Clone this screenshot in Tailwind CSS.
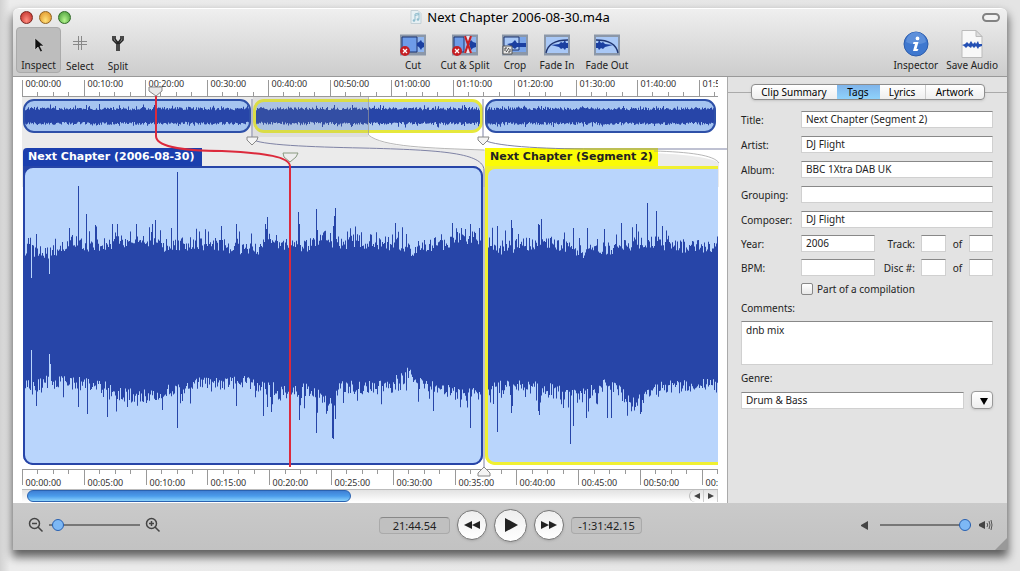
<!DOCTYPE html>
<html lang="en">
<head>
<meta charset="utf-8">
<meta name="viewport" content="width=device-width, initial-scale=1">
<title>Next Chapter 2006-08-30.m4a</title>
<script src="https://cdn.jsdelivr.net/npm/@tailwindcss/browser@4"></script>
</head>
<body class="min-h-screen flex bg-gradient-to-r from-[#d2d2d2] via-[#ececec] via-1% to-[#e4e4e4] pt-2 pl-[13px] pr-[13px] pb-[21px] font-['Noto_Sans',sans-serif] text-[10px] leading-[14px] text-[#222]">
<main class="flex-1 flex flex-col min-w-0 rounded-t-md bg-[#c6c6c6] shadow-[0_6px_10px_1px_rgba(0,0,0,0.6)]">

  <!-- Title bar and toolbar -->
  <header class="h-[69px] flex flex-col rounded-t-md border-t border-b border-t-white border-b-[#999] bg-gradient-to-b from-[#efefef] to-[#cdcdcd]">
    <div class="h-[16px] flex items-center justify-between px-[7px]">
      <div class="w-[52px] flex gap-[6px]">
        <button aria-label="Close" class="size-[13px] rounded-full border border-[#7c2620] bg-radial-[at_50%_75%] from-[#ff8d80] to-[#b92520]"></button>
        <button aria-label="Minimize" class="size-[13px] rounded-full border border-[#8f6220] bg-radial-[at_50%_75%] from-[#ffe27a] to-[#dd8a20]"></button>
        <button aria-label="Zoom" class="size-[13px] rounded-full border border-[#2f6a25] bg-radial-[at_50%_75%] from-[#b5f58d] to-[#3f9433]"></button>
      </div>
      <h1 class="flex items-center gap-[5px] text-[13px] leading-[16px] text-black">
        <svg class="w-3 h-[14px]" viewBox="0 0 12 14"><path d="M1 .5h7l3 3v10H1z" fill="#e6f0f4" stroke="#c3d0d6"/><path d="M5 10V4l4-1v6M5 5.500l4-1" fill="none" stroke="#8fbccd"/><circle cx="4" cy="10.500" r="1.300" fill="#8fbccd"/><circle cx="8" cy="9.500" r="1.300" fill="#8fbccd"/></svg>
        Next Chapter 2006-08-30.m4a
      </h1>
      <div class="w-[52px] flex justify-end"><button aria-label="Toggle toolbar" class="w-[18px] h-[9px] rounded-full border-2 border-[#828282] bg-[#f2f2f2]"></button></div>
    </div>
    <nav class="flex-1 flex justify-between pl-[3px] pr-[9px] pt-[2px]">
      <div class="w-[262px] flex">
        <button class="w-[45px] h-[46px] flex flex-col items-center justify-between pt-[7px] rounded border border-[#aaa] bg-[#bdbdbd]">
          <svg class="w-4 h-5" viewBox="0 0 16 20"><path d="M4 3v12l3-3 2.500 5 2-1-2.500-5h4z" fill="#111" stroke="#ddd" stroke-width=".6"/></svg>Inspect</button>
        <button class="w-[38px] h-[46px] flex flex-col items-center justify-between pt-[7px]">
          <svg class="w-4 h-5" viewBox="0 0 16 20"><path d="M6.500 2v14M9.500 2v14M1 7.500h14M1 10.500h14" stroke="#888"/><path d="M7 8h2v2H7z" fill="#ddd"/></svg>Select</button>
        <button class="w-[38px] h-[46px] flex flex-col items-center justify-between pt-[7px]">
          <svg class="w-4 h-5" viewBox="0 0 16 20"><path d="M3 2v4l4 4v7M13 2v4l-4 4v7M5 2v3l3 4 3-4V2" fill="none" stroke="#222" stroke-width="1.600"/></svg>Split</button>
      </div>
      <div class="flex gap-[10px] pt-[7px]">
        <button class="w-8 flex flex-col items-center gap-[2px]">
          <svg class="w-7 h-[22px]" viewBox="0 0 28 22"><path d="M1 .5h26v21H1z" fill="#8b97a8"/><path d="M3 3h22v15H3z" fill="#8fb5ef"/><path d="M3 3h15v15H3z" fill="#6e9ce8" stroke="#1f3470"/><path d="M18 9l2-1 2-2 1 2 2 1v4l-2 1-1 2-2-3-2-1z" fill="#1b3fa0"/><circle cx="6" cy="17" r="5" fill="#c51f24"/><path d="M4 15l4 4m0-4l-4 4" stroke="#fff" stroke-width="1.300"/></svg>Cut</button>
        <button class="w-[52px] flex flex-col items-center gap-[2px]">
          <svg class="w-7 h-[22px]" viewBox="0 0 28 22"><path d="M1 .5h26v21H1z" fill="#8b97a8"/><path d="M3 3h22v15H3z" fill="#8fb5ef"/><path d="M3 3h10v15H3z" fill="#6e9ce8" stroke="#1f3470"/><path d="M18 8l2-2 2 2 3 1v4l-3 1-2 2-2-3z" fill="#1b3fa0"/><path d="M13 2h8l-3 8 3 9h-8l3-9z" fill="#e8e4f0"/><path d="M14 2l6 17M20 2l-6 17" stroke="#c51f24" stroke-width="2.200"/><circle cx="6" cy="17" r="5" fill="#c51f24"/><path d="M4 15l4 4m0-4l-4 4" stroke="#fff" stroke-width="1.300"/></svg>Cut &amp; Split</button>
        <button class="w-[28px] flex flex-col items-center gap-[2px]">
          <svg class="w-7 h-[22px]" viewBox="0 0 28 22"><path d="M1 .5h26v21H1z" fill="#8b97a8"/><path d="M3 3h22v15H3z" fill="#7ba5e8"/><path d="M3 3h15v13H3z" fill="#a9c8f6" stroke="#1f3470"/><path d="M6 10l5-1 3-3 2 3 9 0v4l-9 0-2 2-3-2z" fill="#1b3fa0"/><path d="M2 12h9v8H2z" fill="#e8e8e8" stroke="#555"/><path d="M4 17v-3h2M9 15v3H7M5 18l3-4" fill="none" stroke="#444"/></svg>Crop</button>
        <button class="w-9 flex flex-col items-center gap-[2px]">
          <svg class="w-7 h-[22px]" viewBox="0 0 28 22"><path d="M1 .5h26v21H1z" fill="#8b97a8"/><path d="M3 3h22v16H3z" fill="#a9c8f6"/><path d="M8 11l8-1 2-2 2 1 2-3 1 3 2 0v5l-2 0-1 2-2-2-2 1-2-2z" fill="#1b3fa0"/><path d="M3 19C5 9 13 6 25 6" fill="none" stroke="#1f3470" stroke-width="1.300"/></svg>Fade In</button>
        <button class="w-[44px] flex flex-col items-center gap-[2px]">
          <svg class="w-7 h-[22px]" viewBox="0 0 28 22"><path d="M1 .5h26v21H1z" fill="#8b97a8"/><path d="M3 3h22v16H3z" fill="#a9c8f6"/><path d="M20 11l-8-1-2-2-2 1-2-3-1 3-2 0v5l2 0 1 2 2-2 2 1 2-2z" fill="#1b3fa0"/><path d="M25 19C23 9 15 6 3 6" fill="none" stroke="#1f3470" stroke-width="1.300"/></svg>Fade Out</button>
      </div>
      <div class="w-[250px] flex justify-end gap-2 pt-[3px]">
        <button class="flex flex-col items-center">
          <svg class="w-7 h-7" viewBox="0 0 28 28"><circle cx="14" cy="14" r="12" fill="#3f78cf" stroke="#2d5cab"/><path d="M4 12a10 10 0 0 1 20 0c-6 3-14 3-20 0z" fill="#5d8fda"/><path d="M15.500 6.500a1.900 1.900 0 1 1 0 3.800 1.900 1.900 0 0 1 0-3.800zM11.500 12h5l-2 7h2l-1 2h-4.500l2-7h-2z" fill="#fff"/></svg>Inspector</button>
        <button class="flex flex-col items-center">
          <svg class="w-7 h-7" viewBox="0 0 28 28"><path d="M4 .5h14l6 6v21H4z" fill="#f8f8f8" stroke="#bbb"/><path d="M18 .5v6h6z" fill="#ddd" stroke="#bbb"/><path d="M4 15l3-1 2-2 2 2 2-3 2 3 2-2 1 2 2-3 1 3 3 0v2l-3 1-1 2-2-3-2 2-2-2-1 2-3-2-2 2-2-2z" fill="#2450b4"/></svg>Save Audio</button>
      </div>
    </nav>
  </header>

  <div class="flex-1 flex min-h-0">
    <!-- Timeline -->
    <section aria-label="Timeline" class="relative isolate flex-1 min-w-0 flex flex-col bg-white border-r border-[#aaa] pl-[9px] pr-[9px] overflow-hidden">
      <!-- Shaded span joining the visible range to the detail view -->
      <svg class="absolute -z-10 left-0 top-0 w-[715px] h-[110px]" viewBox="0 0 715 110"><path d="M9 20H355V58C370 72 420 72 480 73C600 75 690 74 706 86V110H9z" fill="#ebebeb"/></svg>
      <svg id="ruler-top" class="w-full h-5 block bg-white" aria-label="Overview ruler"></svg>
      <div class="flex gap-[2px] pr-[2px] pl-[1px] h-[51px] pt-[2px] pb-[15px]">
        <div class="w-[228px] rounded-[11px] border-2 border-[#2e50a8] bg-[#a5c4f0] overflow-hidden"><svg id="mini-1" class="w-full h-full"></svg></div>
        <div class="w-[230px] rounded-[11px] border-3 border-[#e6e83c] bg-[#b0cbf0] overflow-hidden"><svg id="mini-2" class="w-full h-full"></svg></div>
        <div class="flex-1 min-w-0 rounded-[11px] border-2 border-[#2e50a8] bg-[#a5c4f0] overflow-hidden"><svg id="mini-3" class="w-full h-full"></svg></div>
      </div>
      <div class="flex-1 min-h-0 flex gap-[2px] pl-[1px]">
        <article class="w-[460px] flex flex-col">
          <h2 class="self-start h-[18px] px-[5px] pr-2 rounded-tl bg-[#1b3fae] font-['DejaVu_Sans',sans-serif] text-[11px] leading-[17px] font-bold text-white">Next Chapter (2006-08-30)</h2>
          <div class="flex-1 min-h-0 rounded-tr-[10px] rounded-b-[10px] bg-[#2745a8]"><div class="h-full rounded-[10px] border-2 border-[#2745a8] bg-[#b9d5fc] overflow-hidden"><svg id="wave-1" class="w-full h-full"></svg></div></div>
        </article>
        <article class="flex-1 min-w-0 flex flex-col">
          <h2 class="self-start h-[18px] px-[5px] bg-[#fbfb05] font-['DejaVu_Sans',sans-serif] text-[11px] leading-[17px] font-bold text-[#222]">Next Chapter (Segment 2)</h2>
          <div class="flex-1 min-h-0 rounded-bl-[10px] bg-[#f0f032]"><div class="h-full rounded-l-[10px] border-3 border-r-0 border-[#f0f032] bg-[#b9d5fc] overflow-hidden"><svg id="wave-2" class="w-full h-full"></svg></div></div>
        </article>
      </div>
      <svg id="ruler-bottom" class="w-full h-[24px] block" aria-label="Detail ruler"></svg>
      <div class="flex h-[13px] mb-[1px] border-t border-[#bbb] bg-gradient-to-b from-[#e2e2e2] to-white">
        <div class="flex-1 pl-[5px]"><div class="w-[49%] h-[12px] rounded-full border border-[#2a62b0] bg-gradient-to-b from-[#3f80d4] via-[#4b9ceb] to-[#8ad2fb]"></div></div>
        <button aria-label="Scroll left" class="w-[14px] border-l border-[#bbb] rounded-l-full flex items-center justify-center"><svg class="w-2 h-2" viewBox="0 0 8 8"><path d="M7 1v6L1 4z" fill="#444"/></svg></button>
        <button aria-label="Scroll right" class="w-[15px] border-x border-[#ccc] flex items-center justify-center"><svg class="w-2 h-2" viewBox="0 0 8 8"><path d="M1 1v6l6-3z" fill="#444"/></svg></button>
      </div>
      <!-- Connectors and playhead over the clips -->
      <svg class="absolute left-0 top-0 w-[715px] h-[400px] pointer-events-none" viewBox="0 0 715 400" fill="none">
        <path d="M240 20h115v40H240z" fill="#888" opacity=".13"/>
        <path d="M355.500 20V58c14 12 60 13 116 15M641 74c35 1 60 4 65 12" stroke="#999" stroke-opacity=".7"/>
        <path d="M239 22v40c6 6 60 8 110 9C430 73 470 76 471 93v300M470 22v40c6 7 60 10 110 10h135" stroke="#7f83a5"/>
        <path d="M234 60h11l-1 3-5 5-5-5zM465 60h11l-1 3-5 5-5-5z" fill="#f4f4f4" stroke="#888"/>
        <path d="M465 399v-3l6-6 6 6v3z" fill="#f4f4f4" stroke="#888"/>
        <path d="M136 10h13v4l-6 5-7-5z" fill="#e4e4e4" fill-opacity=".8" stroke="#888"/>
        <path d="M270 76h15l-2 4-6 5-6-5z" fill="#eee" stroke="#8a9a80"/>
        <path d="M143 19v40c0 12 35 15 66 15 45 2 67 6 68 15v301" stroke="#dc2a3c" stroke-width="2"/>
      </svg>
    </section>

    <!-- Inspector -->
    <aside class="w-[279px] bg-[#e3e3e3] flex flex-col">
      <div class="relative flex justify-center pt-[7px] pb-[11px] before:absolute before:inset-x-0 before:top-[15px] before:h-px before:bg-[#aaa]">
        <div role="tablist" class="relative flex h-[16px] rounded border border-[#8d8d8d] bg-gradient-to-b from-white to-[#eee] shadow-sm overflow-hidden text-black">
          <button role="tab" class="w-[85px]">Clip Summary</button>
          <button role="tab" aria-selected="true" class="w-[43px] bg-gradient-to-b from-[#7fb4ea] to-[#8fd2fb]">Tags</button>
          <button role="tab" class="w-[46px] border-r border-[#ccc]">Lyrics</button>
          <button role="tab" class="w-[58px]">Artwork</button>
        </div>
      </div>
      <form class="flex flex-col pl-[13px] pr-[14px]">
        <div class="grid grid-cols-[60px_1fr] auto-rows-[17px] gap-y-[8px] items-center">
          <label for="title">Title:</label><input id="title" value="Next Chapter (Segment 2)" class="min-w-0 h-[17px] px-1 pb-px bg-white border border-[#d0d0d0] border-t-[#888]">
          <label for="artist">Artist:</label><input id="artist" value="DJ Flight" class="min-w-0 h-[17px] px-1 pb-px bg-white border border-[#d0d0d0] border-t-[#888]">
          <label for="album">Album:</label><input id="album" value="BBC 1Xtra DAB UK" class="min-w-0 h-[17px] px-1 pb-px bg-white border border-[#d0d0d0] border-t-[#888]">
          <label for="grouping">Grouping:</label><input id="grouping" class="min-w-0 h-[17px] px-1 bg-white border border-[#d0d0d0] border-t-[#888]">
          <label for="composer">Composer:</label><input id="composer" value="DJ Flight" class="min-w-0 h-[17px] px-1 pb-px bg-white border border-[#d0d0d0] border-t-[#888]">
        </div>
        <div class="grid grid-cols-[60px_74px_46px_25px_23px_1fr] auto-rows-[17px] gap-y-[7px] items-center mt-[7px]">
          <label for="year">Year:</label><input id="year" value="2006" class="min-w-0 h-[17px] px-1 pb-px bg-white border border-[#d0d0d0] border-t-[#888]">
          <label for="track" class="text-right pr-[6px]">Track:</label><input id="track" class="min-w-0 h-[17px] bg-white border border-[#d0d0d0] border-t-[#888]">
          <label for="tracks" class="text-center">of</label><input id="tracks" class="min-w-0 h-[17px] bg-white border border-[#d0d0d0] border-t-[#888]">
          <label for="bpm">BPM:</label><input id="bpm" class="min-w-0 h-[17px] px-1 bg-white border border-[#d0d0d0] border-t-[#888]">
          <label for="disc" class="text-right pr-[6px]">Disc #:</label><input id="disc" class="min-w-0 h-[17px] bg-white border border-[#d0d0d0] border-t-[#888]">
          <label for="discs" class="text-center">of</label><input id="discs" class="min-w-0 h-[17px] bg-white border border-[#d0d0d0] border-t-[#888]">
        </div>
        <label class="flex items-center gap-1 ml-[60px] mt-[6px]"><input type="checkbox" class="appearance-none size-[12px] rounded-[2px] border border-[#888] bg-gradient-to-b from-white to-[#e8e8e8]">Part of a compilation</label>
        <label for="comments" class="mt-[5px]">Comments:</label>
        <textarea id="comments" class="mt-[6px] h-[44px] px-1 py-[1px] resize-none bg-white border border-[#d0d0d0] border-t-[#888]">dnb mix</textarea>
        <label for="genre" class="mt-[6px]">Genre:</label>
        <div class="flex items-center gap-[7px] mt-[6px]">
          <input id="genre" value="Drum &amp; Bass" class="flex-1 min-w-0 h-[17px] px-1 bg-white border border-[#d0d0d0] border-t-[#888]">
          <button type="button" aria-label="Choose genre" class="w-[22px] h-[18px] rounded border border-[#999] bg-gradient-to-b from-white to-[#eee] shadow-sm flex items-end justify-center pl-1 pb-[3px]"><svg class="w-2 h-[7px]" viewBox="0 0 8 7"><path d="M0 0h8L4 7z" fill="#000"/></svg></button>
        </div>
      </form>
    </aside>
  </div>

  <!-- Transport -->
  <footer class="relative h-[47px] flex items-center justify-between pl-[15px] pr-[14px] pb-[3px] bg-gradient-to-b from-[#cacaca] to-[#c2c2c2]">
    <div class="w-[250px] flex items-center gap-[5px]">
      <svg class="size-4" viewBox="0 0 16 16" fill="none" stroke="#444" stroke-width="1.500"><circle cx="6.500" cy="6.500" r="5"/><path d="M4 6.500h5M10 10l4.500 4.500"/></svg>
      <input type="range" aria-label="Timeline zoom" value="4" class="appearance-none w-[91px] h-4 bg-[linear-gradient(#777,#777)] bg-[length:100%_2px] bg-center bg-no-repeat [&::-webkit-slider-thumb]:appearance-none [&::-webkit-slider-thumb]:size-3 [&::-webkit-slider-thumb]:rounded-full [&::-webkit-slider-thumb]:border [&::-webkit-slider-thumb]:border-[#2860b0] [&::-webkit-slider-thumb]:bg-[#7db8f5]">
      <svg class="size-4" viewBox="0 0 16 16" fill="none" stroke="#444" stroke-width="1.500"><circle cx="6.500" cy="6.500" r="5"/><path d="M4 6.500h5M6.500 4v5M10 10l4.500 4.500"/></svg>
    </div>
    <div class="flex items-center gap-[7px]">
      <output class="w-[71px] h-[17px] rounded border border-[#aaa] border-t-[#888] bg-[#c0c0c0] text-center text-[11px] leading-[15px]">21:44.54</output>
      <button aria-label="Rewind" class="size-[30px] rounded-full border border-[#777] bg-gradient-to-b from-[#eee] to-white shadow-sm flex items-center justify-center"><svg class="w-4 h-2" viewBox="0 0 16 8"><path d="M8 0v8L0 4zM16 0v8L8 4z" fill="#222"/></svg></button>
      <button aria-label="Play" class="size-[33px] rounded-full border border-[#777] bg-gradient-to-b from-[#eee] to-white shadow-sm flex items-center justify-center"><svg class="w-[14px] h-[14px]" viewBox="0 0 14 14"><path d="M1 0v14l13-7z" fill="#222"/></svg></button>
      <button aria-label="Fast forward" class="size-[30px] rounded-full border border-[#777] bg-gradient-to-b from-[#eee] to-white shadow-sm flex items-center justify-center"><svg class="w-4 h-2" viewBox="0 0 16 8"><path d="M0 0v8l8-4zM8 0v8l8-4z" fill="#222"/></svg></button>
      <output class="w-[71px] h-[17px] rounded border border-[#aaa] border-t-[#888] bg-[#c0c0c0] text-center text-[11px] leading-[15px]">-1:31:42.15</output>
    </div>
    <div class="w-[250px] flex items-center justify-end gap-2">
      <svg class="w-[7px] h-[9px] mr-1" viewBox="0 0 7 9"><path d="M7 0v9L0 5V4z" fill="#444"/></svg>
      <input type="range" aria-label="Volume" value="100" class="appearance-none w-[91px] h-4 bg-[linear-gradient(#777,#777)] bg-[length:100%_2px] bg-center bg-no-repeat [&::-webkit-slider-thumb]:appearance-none [&::-webkit-slider-thumb]:size-3 [&::-webkit-slider-thumb]:rounded-full [&::-webkit-slider-thumb]:border [&::-webkit-slider-thumb]:border-[#2860b0] [&::-webkit-slider-thumb]:bg-[#7db8f5]">
      <svg class="w-[14px] h-3" viewBox="0 0 14 12"><path d="M6 2v8L0 7V5z" fill="#444"/><path d="M8 4q1.500 2 0 4M10 2q2 4 0 8M12 1q2 5 0 10" fill="none" stroke="#555"/></svg>
    </div>
    <svg class="absolute right-0 bottom-0 size-3" viewBox="0 0 12 12"><path d="M12 0v12H0z" fill="#999"/></svg>
  </footer>
</main>
<script>
const NS = 'http://www.w3.org/2000/svg';
function add(svg, tag, attrs, text) {
  const el = document.createElementNS(NS, tag);
  for (const k in attrs) el.setAttribute(k, attrs[k]);
  if (text) el.textContent = text;
  svg.appendChild(el);
}
function clock(min) {
  return String(Math.floor(min / 60)).padStart(2, '0') + ':' + String(min % 60).padStart(2, '0') + ':00';
}
function ruler(id, minutes, below) {
  const svg = document.getElementById(id), step = below ? 61.8 : 61.5;
  let d = below ? 'M0 4.5H697' : 'M0 19.5H697';
  for (let i = 0; i < 46; i++) {
    const x = Math.round(i * step / 4) + 0.5;
    if (below) d += `M${x} 4v${i % 4 ? 5 : 16}`;
    else d += `M${x} 20v${i % 4 ? -5 : -17}`;
    if (i % 4 === 0) add(svg, 'text', { x: x + 3, y: below ? 21 : 10, 'font-size': 9, fill: '#333' }, clock(i / 4 * minutes));
  }
  add(svg, 'path', { d, stroke: '#999', fill: 'none' });
}
ruler('ruler-top', 10, false);
ruler('ruler-bottom', 5, true);

// Seeded noise keeps each waveform the same from load to load.
function noise(seed) { return () => (seed = (seed * 16807) % 2147483647) / 2147483647; }
function level(points, x) {
  for (let i = 1; i < points.length; i++) {
    if (x <= points[i][0]) {
      const [a, p] = points[i - 1], [b, q] = points[i];
      return p + (q - p) * (x - a) / (b - a);
    }
  }
  return points[points.length - 1][1];
}
function wave(id, w, mid, top, bottom, up, down, seed, amp) {
  const r = noise(seed), svg = document.getElementById(id);
  const upper = [], lower = [];
  for (let x = 0; x < w; x++) {
    const a = r(), b = r();
    let t = level(top, x) + (a - 0.4) * amp + (r() > 0.84 ? amp * r() : 0);
    let u = level(bottom, x) + (b - 0.4) * amp + (r() > 0.84 ? amp * r() : 0);
    if (up[x] !== undefined) t = up[x];
    if (down[x] !== undefined) u = down[x];
    upper.push(`${x} ${(mid - t).toFixed(1)}H${x + 1}`);
    lower.unshift(`${x + 1} ${(mid + u).toFixed(1)}H${x}`);
  }
  add(svg, 'path', { d: 'M' + upper.join('L') + 'L' + lower.join('L') + 'Z', fill: '#2745a8' });
}
wave('wave-1', 460, 148,
  [[0,66],[25,62],[40,68],[60,70],[70,68],[90,73],[115,73],[135,68],[165,71],[200,68],[230,64],[243,76],[260,70],[280,69],[300,79],[312,70],[330,74],[348,69],[360,72],[380,69],[386,62],[395,70],[425,71],[432,78],[460,75]],
  [[0,66],[35,64],[75,68],[90,77],[120,79],[140,74],[170,67],[215,64],[240,70],[260,74],[280,72],[308,84],[314,70],[350,70],[370,64],[378,62],[385,54],[390,66],[415,72],[440,78],[460,76]],
  {6:38,11:82,24:42,44:88,53:130,61:102,70:91,87:92,92:92,111:92,130:96,152:144,211:92,242:99,273:104,274:92,291:107,292:86,308:90,309:100,310:108,370:93,427:93,445:92,454:88},
  {6:34,11:90,24:38,25:48,53:91,62:98,82:101,152:112,211:90,242:91,274:104,291:117,307:122,308:123,310:103,408:95,445:112,238:100,246:96}, 417, 14);
wave('wave-2', 232, 147,
  [[0,74],[15,66],[30,70],[50,72],[75,70],[85,64],[110,63],[140,70],[165,72],[185,68],[210,70],[232,65]],
  [[0,72],[30,68],[60,72],[85,79],[95,78],[115,68],[125,70],[140,82],[152,84],[165,72],[190,69],[232,68]],
  {9:90,23:96,24:88,50:92,51:91,53:97,85:88,99:88,116:87,133:93,148:92,159:113,168:105,174:90},
  {9:116,23:97,24:90,50:95,51:99,82:128,85:110,98:102,119:102,123:102,152:98}, 977, 14);
const mini = { 1: 226, 2: 224, 3: 230 };
for (const k in mini) wave('mini-' + k, mini[k], k === '2' ? 14 : 15, [[0,7],[400,7]], [[0,7],[400,7]],
  k === '1' ? {74:12,152:9} : k === '2' ? {208:11,209:9} : {54:10,176:10}, k === '1' ? {74:9,153:10} : k === '2' ? {208:10} : {52:9,178:9}, 31 * k + 5, 3);
</script>
</body>
</html>
